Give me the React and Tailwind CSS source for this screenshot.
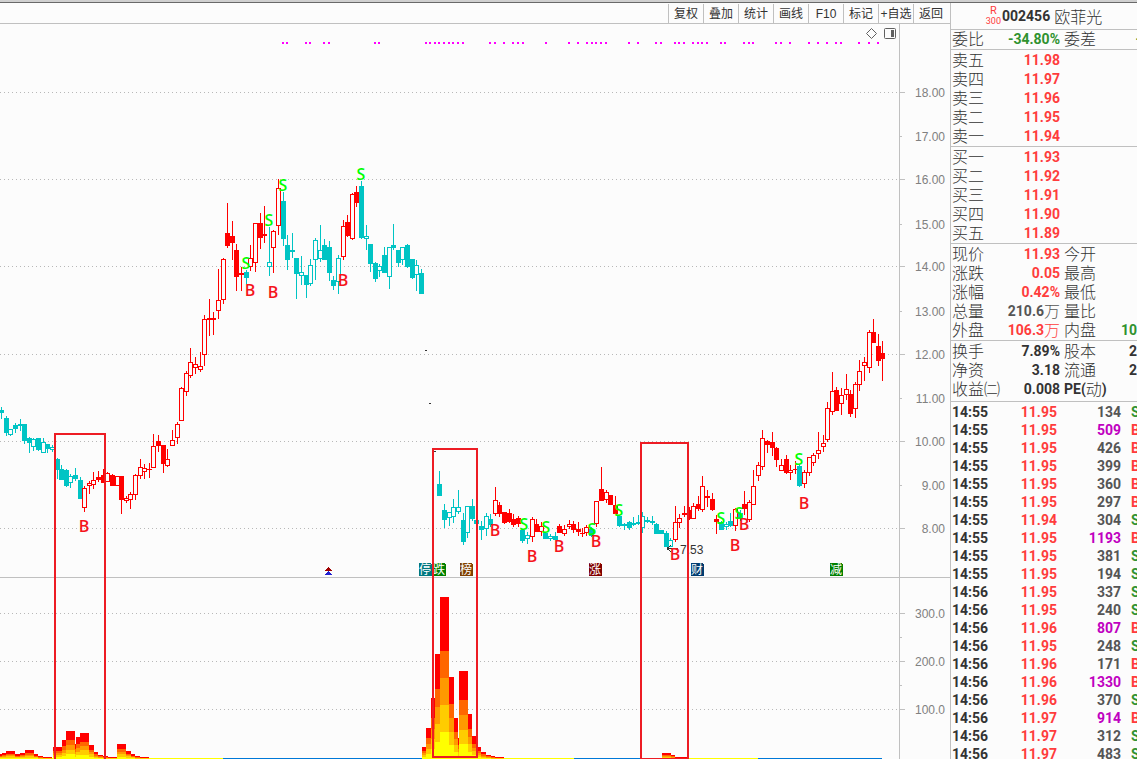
import React from "react";

const menu = ["复权", "叠加", "统计", "画线", "F10", "标记", "+自选", "返回"];

// [x, high, low, top, bottom, type]
// u - red hollow, R - red filled, c - cyan hollow, C - cyan filled
const candles = [
  [1, 407, 419, 410, 413, "C"], [6, 416, 436, 418, 433, "C"], [10, 429, 436, 429, 435, "c"],
  [15, 423, 433, 425, 429, "C"], [20, 419, 431, 424, 426, "C"], [24, 424, 444, 424, 441, "C"],
  [29, 437, 453, 438, 443, "C"], [33, 438, 451, 439, 447, "c"], [38, 438, 451, 438, 450, "C"],
  [43, 438, 453, 442, 453, "c"], [47, 444, 453, 444, 449, "C"], [52, 445, 452, 447, 450, "c"],
  [57, 458, 479, 459, 470, "C"], [61, 465, 480, 469, 480, "C"], [66, 469, 487, 470, 486, "C"],
  [70, 474, 488, 476, 483, "c"], [75, 468, 481, 475, 479, "C"], [80, 477, 499, 480, 499, "C"],
  [84, 486, 512, 488, 508, "u"], [89, 481, 494, 483, 486, "u"], [93, 472, 489, 480, 485, "u"],
  [98, 471, 482, 477, 480, "R"], [103, 469, 483, 475, 483, "R"], [107, 472, 482, 473, 482, "u"],
  [112, 474, 486, 475, 486, "R"], [117, 476, 486, 476, 486, "u"], [121, 476, 514, 476, 500, "R"],
  [126, 496, 503, 498, 501, "u"], [130, 492, 509, 494, 500, "u"], [135, 474, 500, 475, 495, "u"],
  [140, 459, 479, 467, 476, "u"], [144, 464, 479, 468, 472, "u"], [149, 463, 478, 469, 470, "R"],
  [153, 434, 468, 446, 468, "u"], [158, 435, 452, 441, 446, "R"], [163, 445, 473, 445, 464, "R"],
  [167, 449, 467, 459, 466, "u"], [172, 430, 446, 440, 446, "u"], [177, 422, 444, 424, 438, "u"],
  [181, 387, 421, 388, 421, "u"], [186, 371, 396, 373, 392, "u"], [190, 348, 378, 362, 376, "u"],
  [195, 357, 374, 364, 368, "u"], [200, 352, 372, 366, 370, "u"], [204, 315, 366, 319, 355, "u"],
  [209, 299, 336, 318, 320, "R"], [213, 312, 335, 318, 320, "R"], [218, 269, 319, 300, 311, "u"],
  [223, 258, 304, 259, 300, "u"], [227, 203, 248, 233, 246, "R"], [232, 221, 260, 236, 243, "R"],
  [236, 244, 291, 250, 277, "R"], [241, 267, 291, 273, 275, "R"], [246, 270, 284, 272, 278, "C"],
  [250, 245, 271, 258, 267, "u"], [255, 223, 272, 223, 263, "u"], [260, 213, 249, 223, 238, "R"],
  [264, 206, 243, 234, 236, "R"], [269, 227, 276, 262, 267, "c"], [273, 230, 273, 231, 248, "u"],
  [278, 179, 235, 188, 226, "u"], [283, 192, 246, 201, 239, "C"], [287, 235, 270, 245, 260, "C"],
  [292, 233, 258, 250, 252, "C"], [296, 258, 299, 258, 274, "C"], [301, 256, 285, 272, 276, "c"],
  [306, 275, 298, 275, 285, "C"], [310, 259, 286, 265, 284, "c"], [315, 238, 280, 240, 260, "c"],
  [320, 225, 262, 250, 259, "c"], [324, 239, 260, 245, 260, "C"], [329, 241, 281, 247, 273, "C"],
  [333, 276, 290, 280, 286, "C"], [338, 255, 294, 258, 282, "c"], [343, 220, 260, 226, 257, "u"],
  [347, 215, 237, 222, 236, "R"], [352, 193, 240, 194, 239, "u"], [356, 186, 207, 192, 203, "R"],
  [361, 181, 239, 186, 238, "C"], [366, 225, 250, 236, 239, "c"], [370, 244, 272, 244, 264, "C"],
  [375, 262, 282, 263, 279, "C"], [379, 264, 277, 266, 271, "c"], [384, 247, 273, 255, 273, "C"],
  [389, 247, 289, 247, 277, "c"], [393, 224, 250, 245, 248, "C"], [398, 250, 267, 250, 263, "C"],
  [402, 247, 265, 247, 260, "c"], [407, 244, 268, 245, 267, "C"], [412, 259, 279, 259, 278, "C"],
  [416, 260, 291, 265, 275, "c"], [421, 269, 294, 273, 294, "C"],
  [439, 471, 496, 484, 496, "C"], [444, 504, 528, 510, 520, "C"], [449, 512, 526, 512, 518, "c"],
  [453, 499, 523, 507, 517, "c"], [458, 490, 514, 507, 512, "c"], [463, 513, 545, 520, 542, "C"],
  [467, 506, 538, 506, 533, "c"], [472, 499, 521, 506, 519, "C"], [476, 518, 524, 520, 524, "C"],
  [481, 521, 540, 526, 530, "C"], [486, 513, 536, 516, 529, "c"], [490, 514, 527, 519, 525, "C"],
  [495, 487, 516, 500, 514, "u"], [499, 502, 517, 505, 514, "R"], [504, 512, 524, 512, 523, "R"],
  [509, 509, 523, 513, 522, "R"], [513, 514, 527, 519, 525, "R"], [518, 516, 527, 518, 524, "R"],
  [522, 530, 543, 530, 541, "C"], [527, 532, 544, 535, 539, "c"], [532, 517, 542, 519, 537, "u"],
  [536, 519, 532, 524, 532, "R"], [541, 522, 536, 526, 532, "u"], [545, 532, 539, 533, 539, "C"],
  [550, 534, 541, 536, 539, "c"], [555, 532, 540, 536, 540, "C"], [559, 524, 533, 526, 533, "R"],
  [564, 525, 536, 529, 534, "u"], [569, 520, 529, 524, 527, "u"], [573, 521, 533, 524, 530, "R"],
  [578, 522, 536, 529, 532, "R"], [582, 528, 537, 533, 534, "R"], [586, 525, 536, 527, 533, "u"],
  [591, 527, 537, 529, 536, "C"], [596, 501, 527, 501, 524, "u"], [601, 467, 501, 489, 501, "R"],
  [606, 490, 503, 492, 500, "u"], [610, 495, 505, 495, 505, "R"], [615, 496, 514, 505, 514, "R"],
  [619, 515, 527, 516, 526, "C"], [624, 523, 530, 524, 526, "c"], [629, 521, 530, 522, 528, "C"],
  [633, 517, 526, 523, 525, "c"], [638, 515, 525, 522, 524, "c"], [642, 512, 533, 516, 528, "c"],
  [647, 517, 523, 520, 522, "c"], [652, 516, 525, 521, 523, "c"], [656, 523, 534, 524, 534, "C"],
  [661, 530, 534, 530, 534, "C"], [666, 531, 547, 533, 547, "C"], [670, 538, 547, 540, 547, "c"],
  [675, 506, 542, 522, 540, "u"], [679, 514, 528, 518, 523, "u"], [684, 506, 517, 513, 515, "R"],
  [689, 507, 520, 510, 519, "R"], [693, 503, 519, 506, 519, "u"], [698, 496, 511, 504, 509, "R"],
  [702, 476, 512, 486, 510, "u"], [707, 490, 507, 496, 498, "R"], [712, 493, 511, 499, 510, "R"],
  [716, 515, 534, 519, 522, "R"], [721, 521, 530, 522, 530, "C"], [726, 522, 530, 524, 527, "c"],
  [730, 513, 527, 521, 526, "C"], [735, 508, 531, 509, 526, "u"], [740, 510, 521, 513, 519, "C"],
  [744, 491, 515, 504, 509, "R"], [749, 500, 522, 502, 520, "u"], [753, 470, 505, 486, 505, "u"],
  [758, 462, 481, 465, 476, "u"], [762, 430, 470, 438, 467, "u"], [767, 440, 453, 441, 445, "R"],
  [772, 432, 456, 442, 448, "R"], [776, 447, 467, 448, 460, "R"], [781, 459, 471, 465, 471, "u"],
  [786, 455, 474, 459, 473, "R"], [790, 465, 480, 470, 473, "u"], [795, 461, 474, 469, 470, "R"],
  [799, 464, 487, 466, 486, "C"], [804, 470, 488, 472, 484, "u"], [809, 457, 476, 457, 473, "u"],
  [813, 453, 466, 455, 463, "u"], [818, 432, 459, 450, 454, "u"], [823, 435, 452, 443, 447, "u"],
  [827, 402, 442, 408, 440, "u"], [832, 372, 415, 391, 412, "u"], [836, 387, 411, 390, 411, "R"],
  [841, 388, 415, 395, 404, "u"], [846, 374, 400, 389, 395, "u"], [850, 390, 417, 394, 414, "R"],
  [855, 382, 418, 384, 409, "u"], [859, 360, 391, 371, 385, "u"], [864, 357, 381, 362, 366, "u"],
  [869, 330, 373, 332, 368, "u"], [873, 319, 343, 332, 343, "R"], [878, 334, 366, 346, 361, "R"],
  [882, 341, 381, 353, 359, "R"],
];

// [x, width, top]
const volumes = [
  [0, 2, 754], [2, 4, 753], [6, 9, 751], [15, 5, 754], [20, 5, 753], [25, 9, 750],
  [34, 4, 754], [38, 5, 756], [43, 9, 757], [53, 9, 747], [62, 4, 740], [66, 9, 731],
  [75, 1, 744], [76, 4, 737], [80, 9, 733], [89, 5, 745], [94, 4, 752], [98, 5, 755],
  [103, 5, 756], [108, 9, 757], [117, 9, 744], [126, 5, 751], [131, 4, 754], [135, 5, 756],
  [140, 9, 757], [422, 4, 747], [426, 5, 728], [431, 4, 698], [435, 5, 654], [440, 9, 597],
  [449, 5, 677], [454, 4, 718], [458, 1, 738], [459, 9, 671], [468, 4, 714], [472, 6, 736],
  [478, 3, 747], [481, 5, 752], [486, 5, 755], [491, 4, 756], [495, 9, 757],
  [662, 9, 753], [671, 4, 755], [675, 13, 757],
];

const baseline = [
  [0, 223, "#ffff00"], [223, 199, "#0078d7"], [422, 152, "#ffff00"],
  [574, 67, "#0078d7"], [641, 117, "#ffff00"], [758, 124, "#0078d7"],
];

const signalDots = [
  282, 286, 305, 309, 323, 328, 374, 378, 425, 429, 434, 438, 443, 448, 452, 457, 462, 489, 494,
  503, 512, 517, 522, 545, 568, 577, 586, 591, 595, 600, 605, 628, 637, 655, 660, 674, 678, 683,
  692, 697, 701, 706, 720, 724, 743, 748, 752, 775, 780, 789, 808, 817, 826, 835, 840, 858, 868, 877,
];

const buys = [
  [84, 526], [250, 290], [273, 292], [343, 280], [495, 530], [532, 556],
  [559, 546], [596, 541], [675, 554], [744, 524], [735, 545], [804, 503],
];
const sells = [
  [246, 263], [269, 220], [283, 185], [361, 174], [524, 524], [546, 527],
  [592, 529], [619, 510], [721, 518], [739, 513], [799, 459],
];

const badges = [
  [419, "停", "#007880"], [433, "跌", "#008000"], [460, "榜", "#804000"],
  [589, "涨", "#800000"], [691, "财", "#003c70"], [830, "减", "#008000"],
];

const axis = [
  [92, "18.00"], [136, "17.00"], [179, "16.00"], [224, "15.00"], [266, "14.00"], [311, "13.00"],
  [354, "12.00"], [398, "11.00"], [441, "10.00"], [485, "9.00"], [528, "8.00"],
  [613, "300.0"], [661, "200.0"], [709, "100.0"],
];
const gridLines = [92, 179, 266, 354, 441, 528, 613, 661, 709];
const minorTicks = [136, 224, 311, 398, 485, 637, 685];

const asks = [["卖五", "11.98"], ["卖四", "11.97"], ["卖三", "11.96"], ["卖二", "11.95"], ["卖一", "11.94"]];
const bids = [["买一", "11.93"], ["买二", "11.92"], ["买三", "11.91"], ["买四", "11.90"], ["买五", "11.89"]];

const ticks = [
  ["14:55", "11.95", 134, "S"], ["14:55", "11.95", 509, "B"], ["14:55", "11.95", 426, "B"],
  ["14:55", "11.95", 399, "B"], ["14:55", "11.95", 360, "B"], ["14:55", "11.95", 297, "B"],
  ["14:55", "11.94", 304, "S"], ["14:55", "11.95", 1193, "B"], ["14:55", "11.95", 381, "S"],
  ["14:55", "11.95", 194, "S"], ["14:56", "11.95", 337, "S"], ["14:56", "11.95", 240, "S"],
  ["14:56", "11.96", 807, "B"], ["14:56", "11.95", 248, "S"], ["14:56", "11.96", 171, "B"],
  ["14:56", "11.96", 1330, "B"], ["14:56", "11.96", 370, "S"], ["14:56", "11.97", 914, "B"],
  ["14:56", "11.97", 312, "S"], ["14:56", "11.97", 483, "S"],
];

const Candle = ({ data }) => {
  const [x, high, low, top, bottom, type] = data;
  const color = type === "u" || type === "R" ? "#ff0000" : "#00c4c4";
  const hollow = type === "u" || type === "c";
  const h = bottom - top;
  return (
    <g>
      <rect x={x} y={high} width="1" height={low - high} fill={color} />
      <rect x={x - 2} y={top} width="5" height={h} fill={color} />
      {hollow && h > 2 && <rect x={x - 1} y={top + 1} width="3" height={h - 2} fill="#fcfcfc" />}
    </g>
  );
};

const heat = ["#ff6600", "#ff9900", "#ffcc00", "#ffff00"];

const VolumeBar = ({ data }) => {
  const [x, w, top] = data;
  const h = 759 - top;
  return (
    <g>
      <rect x={x} y={top} width={w} height={h} fill="#ff0000" />
      {heat.map((fill, i) => {
        const y = top + Math.round((h * (i + 2)) / 6);
        return <rect key={fill} x={x} y={y} width={w} height={759 - y} fill={fill} />;
      })}
    </g>
  );
};

const Chart = () => (
  <svg viewBox="0 24 950 735" className="block w-full h-auto" shapeRendering="crispEdges">
    {gridLines.map((y) => (
      <g key={y}>
        <line x1="0" x2="899" y1={y + 0.5} y2={y + 0.5} stroke="#b8b8b8" strokeDasharray="1 3" />
        <rect x="900" y={y} width="5" height="1" fill="#c0c0c0" />
      </g>
    ))}
    {minorTicks.map((y) => <rect key={y} x="900" y={y} width="2" height="1" fill="#c0c0c0" />)}
    <rect x="899" y="24" width="1" height="735" fill="#c0c0c0" />
    <rect x="0" y="577" width="950" height="1" fill="#c0c0c0" />

    {signalDots.map((x) => <rect key={x} x={x} y="42" width="2" height="2" fill="#ff00ff" />)}

    {/* chart tools */}
    <path d="M871.5 28.5 L876.5 33.5 L871.5 38.5 L866.5 33.5 Z" fill="none" stroke="#606060" shapeRendering="auto" />
    <rect x="884.5" y="28.5" width="11" height="10" rx="1" fill="none" stroke="#606060" shapeRendering="auto" />
    <rect x="891" y="30" width="3" height="7" fill="#606060" />

    {candles.map((c) => <Candle key={c[0]} data={c} />)}

    {/* trading halt marks */}
    <rect x="425" y="350" width="2" height="1" fill="#333" />
    <rect x="429" y="403" width="2" height="1" fill="#333" />
    <rect x="434" y="451" width="2" height="1" fill="#333" />

    {baseline.map(([x, w, fill]) => <rect key={x} x={x} y="758" width={w} height="1" fill={fill} />)}
    {volumes.map((v) => <VolumeBar key={v[0]} data={v} />)}

    {/* lowest price */}
    <path d="M667 548.5 H678 M667 548.5 L671 545.5 M667 548.5 L671 551.5" stroke="#333" fill="none" />
    <text x="680" y="554" fontSize="12" fill="#333" className="font-['Liberation_Sans',sans-serif]">7.53</text>

    <g fontSize="16" fontWeight="600" textAnchor="middle" className="font-['Open_Sans',sans-serif]">
      {buys.map(([x, y]) => <text key={x} x={x} y={y + 6} fill="#f5141c">B</text>)}
      {sells.map(([x, y]) => <text key={x} x={x} y={y + 6} fill="#00ff00">S</text>)}
    </g>

    <g fontSize="12" textAnchor="middle" fill="#fff" className="font-['Noto_Sans_CJK_SC',sans-serif]">
      {badges.map(([x, label, fill]) => (
        <g key={x}>
          <path d={`M${x} 563 h11 l2 2 v11 h-13 Z`} fill={fill} />
          <text x={x + 6} y="574">{label}</text>
        </g>
      ))}
    </g>
    <path d="M324 571 L328 567 L332 571 Z" fill="#a00000" />
    <path d="M324 575 L328 571 L332 575 Z" fill="#2020d0" />

    {/* highlighted ranges */}
    <g fill="none" stroke="#ed1c24" strokeWidth="2">
      <rect x="55" y="434" width="50" height="340" />
      <rect x="433" y="449" width="44" height="308" />
      <rect x="641" y="443" width="47" height="316" />
    </g>

    <g fontSize="12" textAnchor="end" fill="#808080" className="font-['Liberation_Sans',sans-serif]">
      {axis.map(([y, label]) => <text key={y} x="945" y={y + 5}>{label}</text>)}
    </g>
  </svg>
);

const num = "font-['Roboto','Noto_Sans_CJK_SC',sans-serif] text-sm font-bold";

const QuoteRow = ({ label, value, color, unit, label2, value2, color2 }) => (
  <div className="flex h-[19px] whitespace-nowrap leading-4">
    <div className="flex w-[108px] shrink-0 justify-between">
      <span>{label}</span>
      <span className={`flex ${color}`}>
        <span className={`${num} leading-[18px]`}>{value}</span>
        {unit && <span>{unit}</span>}
      </span>
    </div>
    <span className="flex pl-1">{label2}</span>
    <span className={`ml-auto ${num} leading-[18px] ${color2 || ""}`}>{value2}</span>
  </div>
);

const QuotePanel = () => (
  <aside className="w-[187px] shrink-0 overflow-hidden border-l border-[#c0c0c0] font-light text-[#333]">
    <h1 className="flex h-[27px] items-center justify-center gap-1 border-b border-[#c0c0c0] font-light">
      <span className="flex items-center gap-px">
        <span className="flex flex-col items-center font-['Roboto',sans-serif] text-[11px] leading-[10px] text-[#ff3c3c]">
          <b>R</b>
          <span className="text-[9px] font-normal leading-[10px]">300</span>
        </span>
        <span className={num}>002456</span>
      </span>
      <span className="leading-4">欧菲光</span>
    </h1>
    <section className="border-b border-[#c0c0c0] pl-px">
      <QuoteRow label="委比" value="-34.80%" color="text-[#2f922f]" label2="委差" value2={<span className="-mr-1">-</span>} color2="text-[#2f922f]" />
    </section>
    <section className="border-b border-[#c0c0c0] pl-px pt-px">
      {asks.map(([label, value]) => (
        <QuoteRow key={label} label={label} value={value} color="text-[#ff3c3c]" />
      ))}
    </section>
    <section className="border-b border-[#c0c0c0] pl-px pt-px">
      {bids.map(([label, value]) => (
        <QuoteRow key={label} label={label} value={value} color="text-[#ff3c3c]" />
      ))}
    </section>
    <section className="border-b border-[#c0c0c0] pl-px pt-px">
      <QuoteRow label="现价" value="11.93" color="text-[#ff3c3c]" label2="今开" />
      <QuoteRow label="涨跌" value="0.05" color="text-[#ff3c3c]" label2="最高" />
      <QuoteRow label="涨幅" value="0.42%" color="text-[#ff3c3c]" label2="最低" />
      <QuoteRow label="总量" value="210.6" unit="万" color="text-[#555]" label2="量比" />
      <QuoteRow label="外盘" value="106.3" unit="万" color="text-[#ff3c3c]" label2="内盘" value2="10" color2="text-[#2f922f]" />
    </section>
    <section className="border-b border-[#c0c0c0] pl-px pt-px pb-0.5">
      <QuoteRow label="换手" value="7.89%" color="text-[#333]" label2="股本" value2="2" />
      <QuoteRow label="净资" value="3.18" color="text-[#333]" label2="流通" value2="2" />
      <QuoteRow
        label="收益㈡"
        value="0.008"
        color="text-[#333]"
        label2={
          <>
            <span className={`${num} leading-[18px]`}>PE(</span>
            <span>动</span>
            <span className={`${num} leading-[18px]`}>)</span>
          </>
        }
      />
    </section>
    <table className={`mt-px ml-px w-[185px] table-fixed border-collapse ${num}`}>
      <tbody>
        {ticks.map(([time, price, volume, side], i) => (
          <tr key={i} className="h-[18px] leading-[18px]">
            <td className="w-[52px] p-0">{time}</td>
            <td className="w-[53px] p-0 text-right text-[#ff3c3c]">{price}</td>
            <td className={`w-16 p-0 text-right ${volume >= 500 ? "text-[#c000c0]" : "text-[#555]"}`}>{volume}</td>
            <td className={`overflow-hidden p-0 pl-[10px] ${side === "B" ? "text-[#ff3c3c]" : "text-[#2f922f]"}`}>{side}</td>
          </tr>
        ))}
      </tbody>
    </table>
  </aside>
);

const App = () => {
  return (
    <div className="flex h-screen flex-col overflow-hidden bg-[#fcfcfc] font-['Noto_Sans_CJK_SC',sans-serif] text-base leading-none">
      <div className="h-[3px] shrink-0 border-b border-[#696969] bg-[#d0d0d0]" />
      <div className="flex min-h-0 flex-1">
        <main className="min-w-0 flex-1">
          <nav className="flex h-[21px] justify-end border-b border-[#c0c0c0] pt-px pr-0.5">
            {menu.map((item) => (
              <button
                key={item}
                type="button"
                className="w-[35px] whitespace-nowrap border-l border-[#c0c0c0] text-xs leading-none text-[#333] font-['Liberation_Sans','Noto_Sans_CJK_SC',sans-serif]"
              >
                {item}
              </button>
            ))}
          </nav>
          <Chart />
        </main>
        <QuotePanel />
      </div>
    </div>
  );
};

export default App;
